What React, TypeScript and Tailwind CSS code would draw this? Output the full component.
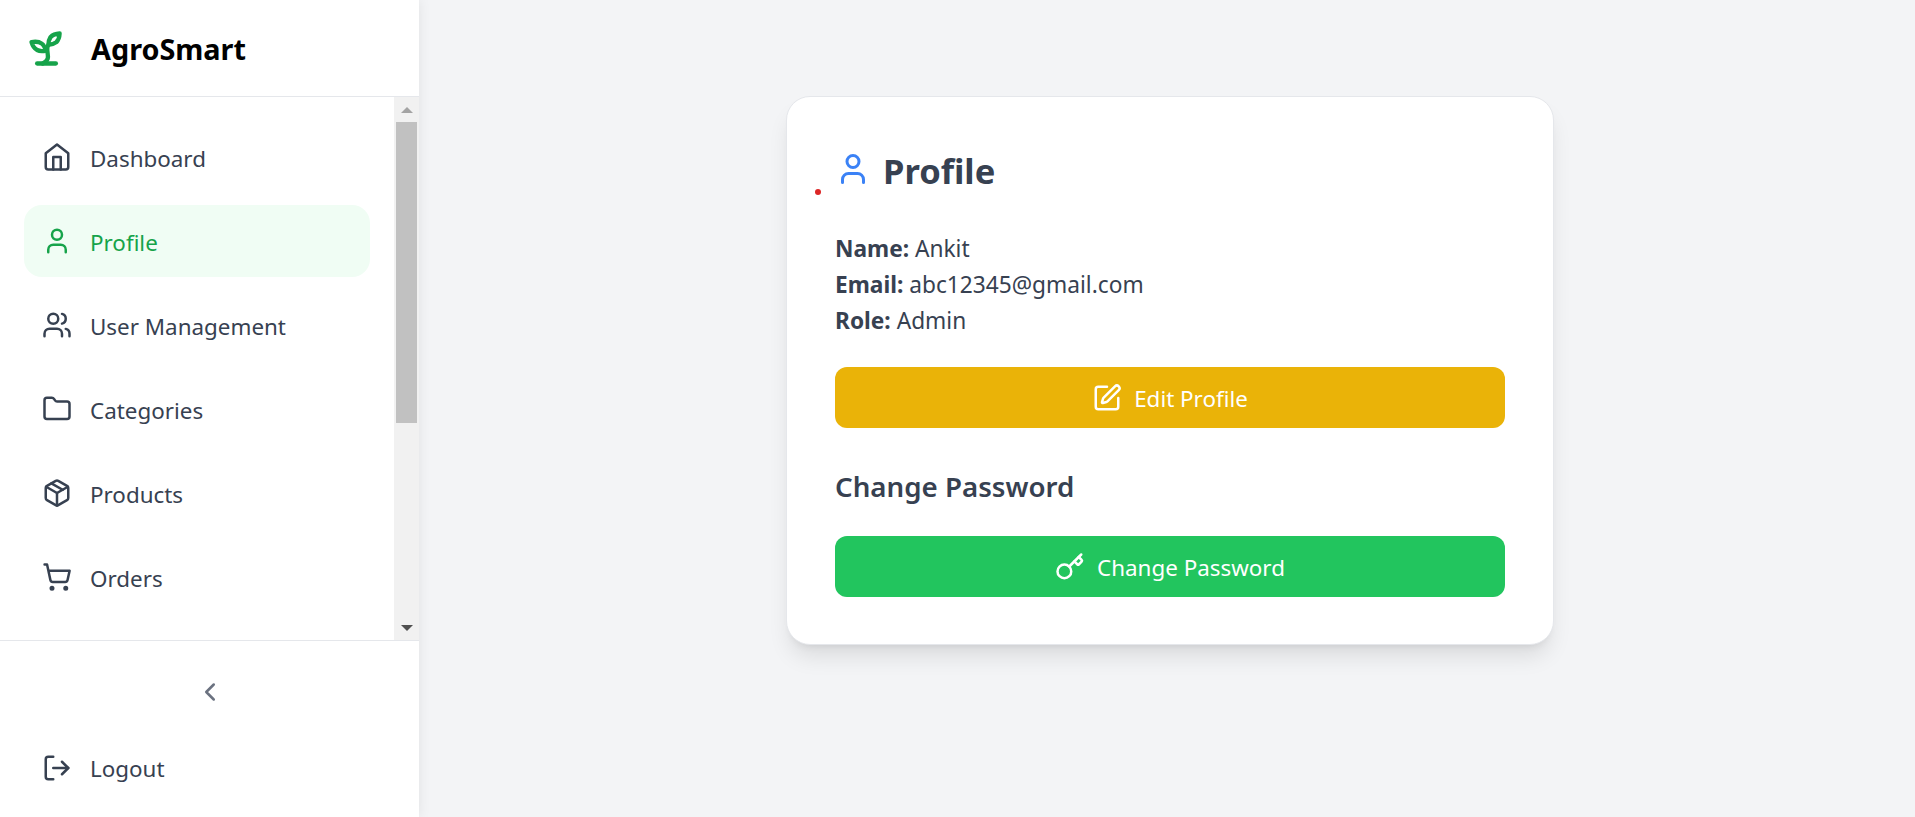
import { Folder, Package, ShoppingCart, User, Users, LogOut, ChevronLeft, SquarePen, Key } from "lucide-react";

const font = { fontFamily: '"Noto Sans", sans-serif' };

function HomeIcon({ className }: { className?: string }) {
  return (
    <svg className={className} width="30" height="30" viewBox="0 0 24 24" fill="none" stroke="currentColor" strokeWidth="2" strokeLinecap="round" strokeLinejoin="round">
      <path d="m3 9 9-7 9 7v11a2 2 0 0 1-2 2H5a2 2 0 0 1-2-2z" />
      <polyline points="9 22 9 12 15 12 15 22" />
    </svg>
  );
}

function SproutIcon() {
  return (
    <svg className="shrink-0 text-[#16a34a]" width="45" height="45" viewBox="0 0 24 24" fill="none" stroke="currentColor" strokeWidth="2.3" strokeLinecap="round" strokeLinejoin="round">
      <path d="M7 20h10" />
      <path d="M10 20c5.5-2.5.8-6.4 3-10" />
      <path d="M9.5 9.4c1.1.8 1.8 2.2 2.3 3.7-2 .4-3.5.4-4.8-.3-1.2-.6-2.3-1.9-3-4.2 2.8-.5 4.4 0 5.5.8z" />
      <path d="M14.1 6a7 7 0 0 0-1.1 4c1.9-.1 3.3-.6 4.3-1.4 1-1 1.6-2.3 1.7-4.6-2.7.1-4 1-4.9 2z" />
    </svg>
  );
}

const items = [
  { label: "Dashboard", Icon: HomeIcon },
  { label: "Profile", Icon: User, active: true },
  { label: "User Management", Icon: Users },
  { label: "Categories", Icon: Folder },
  { label: "Products", Icon: Package },
  { label: "Orders", Icon: ShoppingCart },
];

export default function App() {
  return (
    <div className="flex h-[817px] w-[1915px] overflow-hidden bg-[#f3f4f6]" style={font}>
      <aside className="flex h-full w-[419px] shrink-0 flex-col bg-white shadow-[0_0_12px_rgba(0,0,0,0.08)]">
        <div className="flex h-[97px] shrink-0 items-center gap-[22px] border-b border-[#e5e7eb] pl-[24px]">
          <SproutIcon />
          <span className="text-[28.8px] font-bold leading-[45px] text-black">AgroSmart</span>
        </div>
        <div className="flex min-h-0 flex-1">
          <nav className="flex min-w-0 flex-1 flex-col gap-[12px] overflow-hidden px-[24px] pt-[24px]">
            {items.map(({ label, Icon, active }) => (
              <div
                key={label}
                className={
                  active
                    ? "flex h-[72px] shrink-0 items-center gap-[18px] rounded-[18px] bg-[#f0fdf4] px-[18px] text-[#16a34a]"
                    : "flex h-[72px] shrink-0 items-center gap-[18px] rounded-[18px] px-[18px] text-[#374151]"
                }
              >
                <Icon className="shrink-0" width={30} height={30} />
                <span className="pt-[4px] text-[22.4px] leading-[36px]">{label}</span>
              </div>
            ))}
          </nav>
          <div className="flex w-[25px] shrink-0 flex-col bg-[#f1f1f1]">
            <div className="flex h-[25px] shrink-0 items-center justify-center">
              <div className="h-0 w-0 border-x-[6px] border-b-[6px] border-x-transparent border-b-[#a3a3a3]" />
            </div>
            <div className="mx-[2px] h-[301px] shrink-0 bg-[#c1c1c1]" />
            <div className="flex-1" />
            <div className="flex h-[25px] shrink-0 items-center justify-center">
              <div className="h-0 w-0 border-x-[6px] border-t-[6px] border-x-transparent border-t-[#505050]" />
            </div>
          </div>
        </div>
        <div className="flex h-[177px] shrink-0 flex-col border-t border-[#e5e7eb] px-[24px]">
          <div className="flex justify-center pt-[36px]">
            <ChevronLeft size={30} className="text-[#6b7280]" />
          </div>
          <div className="mt-[25px] flex h-[72px] items-center gap-[18px] px-[18px] text-[#374151]">
            <LogOut size={30} />
            <span className="pt-[2px] text-[22.4px] leading-[36px]">Logout</span>
          </div>
        </div>
      </aside>
      <main className="flex flex-1 justify-center pl-[6px] pt-[96px]">
        <div className="relative h-[549px] w-[768px] rounded-[24px] border border-[#e5e7eb] bg-white p-[48px] shadow-[0_15px_22px_-4px_rgba(0,0,0,0.1),0_6px_9px_-6px_rgba(0,0,0,0.1)]">
          <span className="absolute left-[28px] top-[92px] h-[6px] w-[6px] rounded-full bg-[#dc2626]" />
          <h1 className="flex h-[52px] items-center gap-[12px] text-[34.5px] font-bold leading-[52px] text-[#374151]">
            <User size={36} className="-mt-[5px] text-[#3b82f6]" />
            Profile
          </h1>
          <div className="mt-[34px] text-[22.7px] leading-[36px] text-[#374151]">
            <p><strong className="font-bold">Name:</strong> Ankit</p>
            <p><strong className="font-bold">Email:</strong> abc12345@gmail.com</p>
            <p><strong className="font-bold">Role:</strong> Admin</p>
          </div>
          <button className="mt-[28px] flex h-[61px] w-full items-center justify-center gap-[12px] rounded-[12px] bg-[#eab308] text-[22.4px] text-white">
            <SquarePen size={30} />
            <span className="pt-[2px]">Edit Profile</span>
          </button>
          <h2 className="mt-[36px] text-[27.7px] font-semibold leading-[45px] text-[#374151]">Change Password</h2>
          <button className="mt-[27px] flex h-[61px] w-full items-center justify-center gap-[12px] rounded-[12px] bg-[#22c55e] text-[22.4px] text-white">
            <Key size={30} />
            <span className="pt-[2px]">Change Password</span>
          </button>
        </div>
      </main>
    </div>
  );
}
